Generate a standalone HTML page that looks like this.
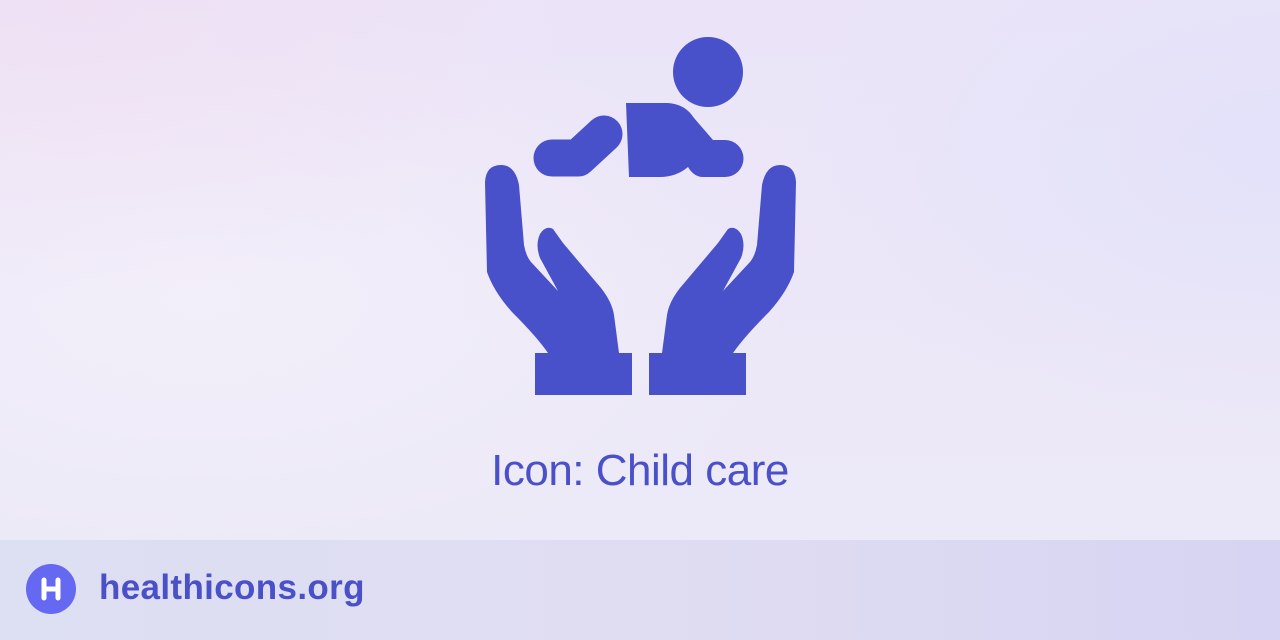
<!DOCTYPE html>
<html><head><style>
html,body{margin:0;width:1280px;height:640px;overflow:hidden}
body{position:relative;background:linear-gradient(180deg,#ebe4f8 0%,#ece8f8 60%,#eceaf8 100%);font-family:"Liberation Sans",sans-serif}
.g1{position:absolute;inset:0;background:radial-gradient(ellipse 500px 300px at 80px 0px,rgba(242,222,242,.6),rgba(242,222,242,0) 100%),radial-gradient(ellipse 500px 300px at 1280px 150px,rgba(225,225,250,.8),rgba(225,225,250,0)),radial-gradient(ellipse 600px 300px at 200px 300px,rgba(245,242,250,.7),rgba(245,242,250,0))}
.bar{position:absolute;left:0;top:540px;width:1280px;height:100px;background:linear-gradient(90deg,#dddff2,#e0ddf2 50%,#d6d4f2)}
.t{position:absolute;left:0;width:1280px;top:446px;text-align:center;font-size:44px;color:#4a50c8;letter-spacing:-0.5px}
.logo{position:absolute;left:26px;top:564px;width:50px;height:50px;border-radius:50%;background:#6568f0}
.site{position:absolute;left:99px;top:568px;font-size:35px;font-weight:bold;color:#4a50c8;letter-spacing:0.35px}
</style></head><body>
<div class="g1"></div>
<svg width="1280" height="640" style="position:absolute;left:0;top:0">
<g fill="#4850ca">
<circle cx="708" cy="72" r="35"/>
<path d="M626,103 L668,103 Q685,104 694,118 L713,140 L725,140 A18.5,18.5 0 0 1 725,177 L703,177 Q694,177 688,167 Q676,177 660,177 L629,177 Z"/>
<polyline points="552,158 578,158 604,134" fill="none" stroke="#4850ca" stroke-width="37" stroke-linecap="round" stroke-linejoin="round"/>
<path id="h" d="M485,182 Q486,165 501,165 Q515,165 519,185 L524,245 Q526,256 531,262 L558,291 L540,258 Q535,245 540,234 Q546,225 553,229 L563,243 L601,288 Q612,302 614,315 L619,353 L632,353 L632,395 L535,395 L535,353 L548,353 Q537,337 512,312 Q494,292 487,272 Z"/>
<use href="#h" transform="translate(1281,0) scale(-1,1)"/>
</g>
</svg>
<div class="t">Icon: Child care</div>
<div class="bar"></div>
<div class="logo"><svg width="50" height="50"><g stroke="#fff" stroke-width="5" stroke-linecap="round"><line x1="18" y1="16" x2="18" y2="34"/><line x1="32" y1="16" x2="32" y2="34"/><line x1="18" y1="25" x2="32" y2="25"/></g></svg></div>
<div class="site">healthicons.org</div>
</body></html>
